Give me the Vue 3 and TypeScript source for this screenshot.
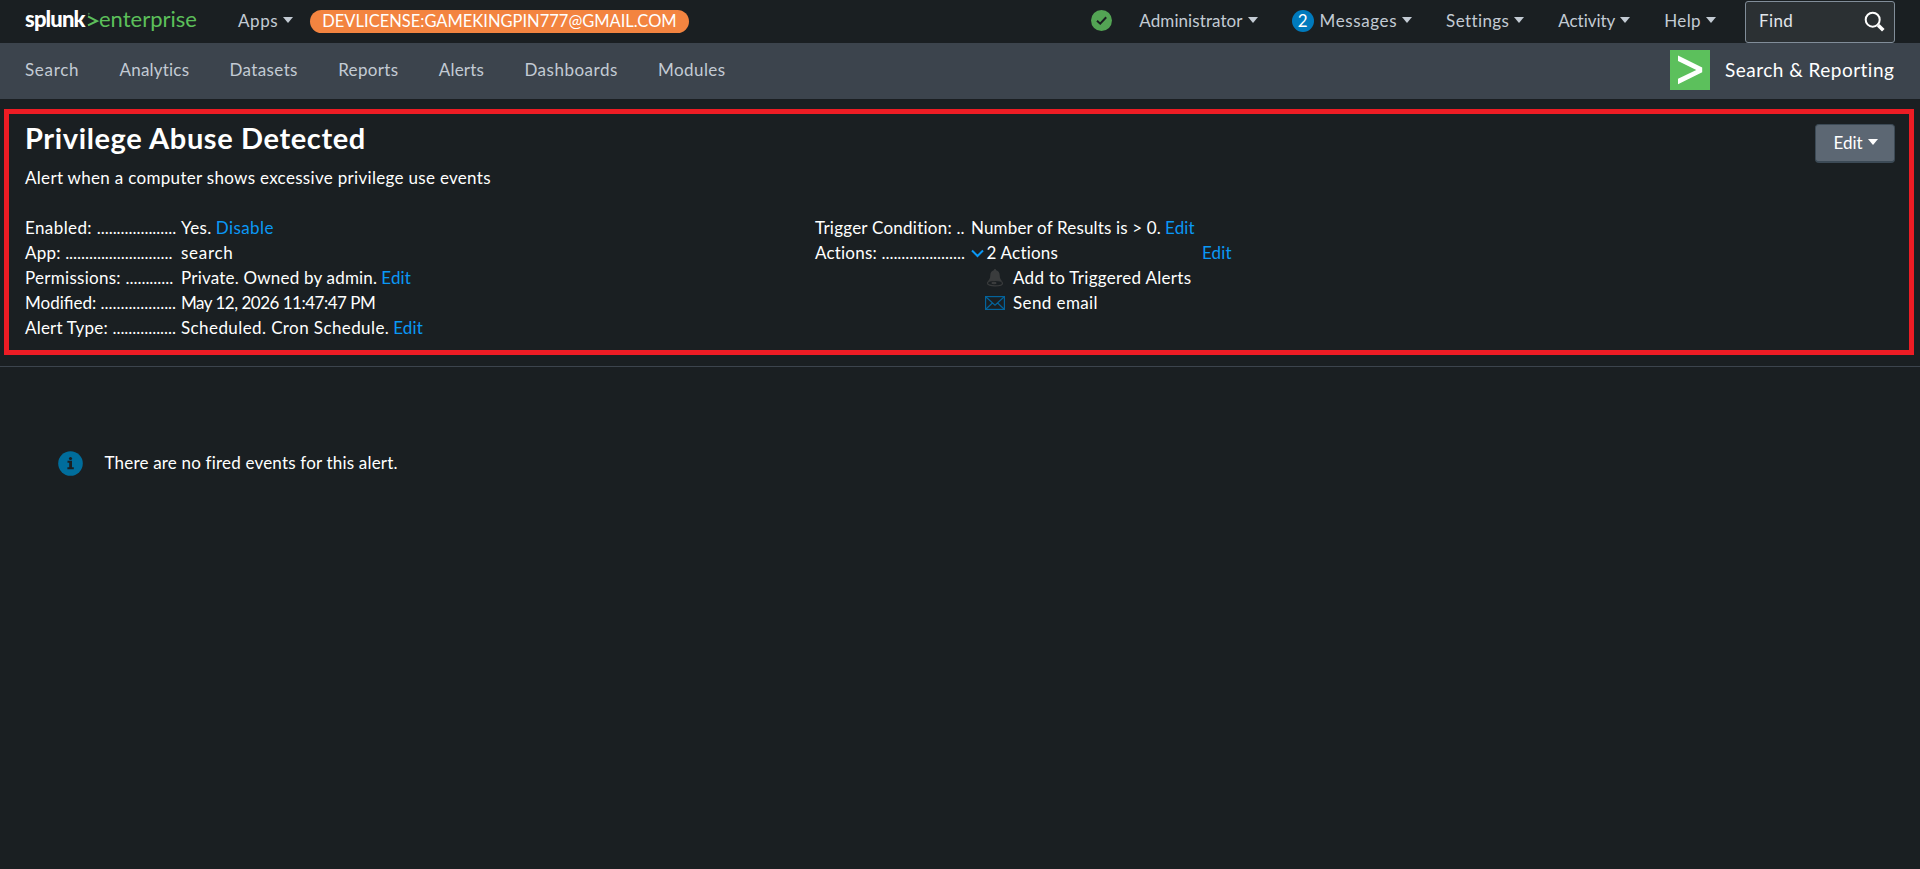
<script setup lang="ts">
interface Label {
  text: string
  track: number
}
interface Detail {
  label: Label
  dots: number
  value: Label
  link?: Label
}

const edit: Label = { text: 'Edit', track: 0.15 }

const menus: (Label & { count?: number })[] = [
  { text: 'Administrator', track: 0.08 },
  { text: 'Messages', track: 0.6, count: 2 },
  { text: 'Settings', track: 0.4 },
  { text: 'Activity', track: -0.06 },
  { text: 'Help', track: 0.4 },
]

const navItems: Label[] = [
  { text: 'Search', track: 0.7 },
  { text: 'Analytics', track: 0.2 },
  { text: 'Datasets', track: 0.38 },
  { text: 'Reports', track: 0.35 },
  { text: 'Alerts', track: 0.2 },
  { text: 'Dashboards', track: 0.5 },
  { text: 'Modules', track: 0.42 },
]

const details: Detail[] = [
  { label: { text: 'Enabled:', track: 0.4 }, dots: 20, value: { text: 'Yes.', track: 0.4 }, link: { text: 'Disable', track: 0.42 } },
  { label: { text: 'App:', track: 0.2 }, dots: 27, value: { text: 'search', track: 0.7 } },
  { label: { text: 'Permissions:', track: 0.28 }, dots: 12, value: { text: 'Private. Owned by admin.', track: 0.2 }, link: edit },
  { label: { text: 'Modified:', track: 0 }, dots: 19, value: { text: 'May 12, 2026 11:47:47 PM', track: -0.5 } },
  { label: { text: 'Alert Type:', track: 0.2 }, dots: 16, value: { text: 'Scheduled. Cron Schedule.', track: 0.41 }, link: edit },
]

const leader = (n: number) => '.'.repeat(n)

const tracking = (l: Label) => ({ letterSpacing: `${l.track}px` })
</script>

<template>
  <div class="page">
    <header class="topbar">
      <div class="brand">
        <span class="brand-name">splunk</span>
        <svg class="brand-mark" width="12" height="16" viewBox="0 0 12 16">
          <path d="M1 4.4 10 9 1 13.4" fill="none" stroke="#5cbf5a" stroke-width="2" />
          <circle cx="1.8" cy="1.8" r="1" fill="#43774a" />
        </svg>
        <span class="brand-edition">enterprise</span>
      </div>
      <div class="menu apps"><span class="apps-text">Apps</span><i class="caret"></i></div>
      <span class="license">DEVLICENSE:GAMEKINGPIN777@GMAIL.COM</span>
      <div class="menus">
        <svg class="health" width="21" height="21" viewBox="0 0 21 21">
          <circle cx="10.5" cy="10.5" r="10.5" fill="#53a454" />
          <path d="M6 10.8 9.2 13.7 15.2 7.2" fill="none" stroke="#1a1f22" stroke-width="2" />
        </svg>
        <div v-for="m in menus" :key="m.text" class="menu">
          <span v-if="m.count" class="count">{{ m.count }}</span>
          <span :style="tracking(m)">{{ m.text }}</span><i class="caret"></i>
        </div>
        <div class="find">
          <span class="find-text">Find</span>
          <svg width="22" height="22" viewBox="0 0 22 22" fill="none" stroke="#fff">
            <circle cx="8.7" cy="8.7" r="7" stroke-width="2" />
            <path d="M14.2 14.2 19.3 19.3" stroke-width="3.6" />
          </svg>
        </div>
      </div>
    </header>

    <nav class="appbar">
      <a v-for="n in navItems" :key="n.text" class="nav-link" :style="tracking(n)">{{ n.text }}</a>
      <div class="app">
        <svg width="40" height="40" viewBox="0 0 40 40">
          <rect width="40" height="40" fill="#5cc05c" />
          <path d="M8 5.5 32.2 17.6V22.2L8 34.3V28.7L26.3 20 8 11Z" fill="#fff" />
        </svg>
        <span class="app-name">Search &amp; Reporting</span>
      </div>
    </nav>

    <section class="alert">
      <div class="summary">
        <h1 class="title">Privilege Abuse Detected</h1>
        <p class="description">Alert when a computer shows excessive privilege use events</p>
        <div class="columns">
          <div class="column">
            <div v-for="d in details" :key="d.label.text" class="row">
              <span class="key" :style="tracking(d.label)">{{ d.label.text }} <span class="dots">{{ leader(d.dots) }}</span></span>
              <span :style="tracking(d.value)">{{ d.value.text }}</span>
              <a v-if="d.link" class="link" :style="tracking(d.link)">{{ d.link.text }}</a>
            </div>
          </div>
          <div class="column">
            <div class="row">
              <span class="key trigger">Trigger Condition: <span class="dots">{{ leader(2) }}</span></span>
              <span class="condition">Number of Results is &gt; 0.</span>
              <a class="link">Edit</a>
            </div>
            <div class="row">
              <span class="key actions">Actions: <span class="dots">{{ leader(21) }}</span></span>
              <span class="toggle">
                <svg width="13" height="9" viewBox="0 0 13 9"><path d="M1 1.5 6.5 7 12 1.5" fill="none" stroke="#0a98f5" stroke-width="2" /></svg>
                2 Actions
              </span>
              <a class="link-edge">Edit</a>
            </div>
            <div class="row action">
              <svg class="action-icon" width="20" height="18" viewBox="0 0 20 18">
                <path d="M8.8 1.2a1.2 1.2 0 0 1 2.4 0c2.4.6 3.4 2.5 3.5 5 .1 3 .9 4.6 2.6 6.1H2.7c1.7-1.5 2.5-3.1 2.6-6.1.1-2.5 1.1-4.4 3.500-5Z" fill="#3a3c3d" />
                <ellipse cx="10" cy="14.2" rx="7.500" ry="2.700" fill="#1a1f22" stroke="#3a3c3d" stroke-width="1.2" />
                <ellipse cx="9" cy="14" rx="2.600" ry="1.200" fill="#3a3c3d" />
              </svg>
              <span class="add">Add to Triggered Alerts</span>
            </div>
            <div class="row action">
              <svg class="action-icon" width="20" height="14" viewBox="0 0 20 14" fill="none" stroke="#04639b">
                <rect x=".6" y=".6" width="18.800" height="12.800" stroke-width="1.200" />
                <path d="M1 1 10 9.300 19 1M1 13 7.400 7M19 13 12.600 7" stroke-width="1.200" />
              </svg>
              <span class="send">Send email</span>
            </div>
          </div>
        </div>
      </div>
      <button class="edit-button" type="button">Edit<i class="caret"></i></button>
    </section>

    <main class="results">
      <svg width="25" height="25" viewBox="0 0 25 25">
        <circle cx="12.5" cy="12.5" r="12.3" fill="#006d9c" />
        <path d="M9.5 9.800H14V16.300H15.800V18.200H9.400V16.300H11.200V11.700H9.500Z" fill="#1a1f22" />
        <circle cx="12.5" cy="7.5" r="1.6" fill="#1a1f22" />
      </svg>
      <span class="message">There are no fired events for this alert.</span>
    </main>
  </div>
</template>

<style>
body {
  background: #1a1f22;
}
</style>

<style scoped>
.page {
  min-height: 869px;
  background: #1a1f22;
  color: #fff;
  font: 17px/25px Lato, "Liberation Sans", sans-serif;
}
.topbar {
  box-sizing: border-box;
  display: flex;
  align-items: flex-start;
  height: 43px;
  padding: 0 25px;
  color: #c3cbd4;
}
.brand {
  display: flex;
  width: 213px;
  padding-top: 6px;
  font-size: 22px;
  line-height: 26px;
}
.brand-name {
  width: 62px;
  color: #fff;
  font-weight: 900;
  letter-spacing: -0.85px;
}
.brand-mark {
  margin-top: 6px;
}
.brand-edition {
  color: #5cbf5a;
}
.menu {
  display: flex;
  align-items: center;
  padding-top: 8px;
  white-space: nowrap;
}
.apps {
  width: 72px;
}
.apps-text {
  letter-spacing: 0.6px;
}
.caret {
  width: 0;
  height: 0;
  margin: -1px 0 0 5px;
  border: 5px solid transparent;
  border-top: 6px solid currentColor;
  border-bottom: 0;
}
.license {
  box-sizing: border-box;
  width: 379px;
  height: 23px;
  margin-top: 10px;
  border-radius: 12px;
  background: #f38440;
  color: #fff;
  font-size: 16.5px;
  line-height: 22px;
  text-align: center;
}
.menus {
  display: flex;
  align-items: flex-start;
  gap: 34px;
  margin-left: auto;
}
.health {
  margin: 10px -7px 0 0;
}
.count {
  width: 22px;
  height: 22px;
  margin-right: 6px;
  border-radius: 11px;
  background: #007abd;
  color: #fff;
  line-height: 21px;
  text-align: center;
}
.find {
  box-sizing: border-box;
  display: flex;
  justify-content: space-between;
  width: 150px;
  height: 42px;
  margin: 1px 0 0 -5px;
  padding: 6px 8px 0 13px;
  border: 1px solid #818d99;
  border-radius: 3px;
  background: #2b3033;
  color: #e1e6eb;
}
.find-text {
  letter-spacing: 0.4px;
}
.find svg {
  margin-top: 3px;
}
.appbar {
  box-sizing: border-box;
  display: flex;
  gap: 40.3px;
  height: 56px;
  padding: 14px 25px 0;
  background: #3c444d;
  color: #c3cbd4;
}
.app {
  display: flex;
  gap: 15px;
  margin: -7px 0 0 auto;
  color: #fff;
}
.app-name {
  width: 170px;
  padding-top: 7px;
  font-size: 19px;
  letter-spacing: 0.48px;
  white-space: nowrap;
}
.alert {
  box-sizing: border-box;
  display: flex;
  justify-content: space-between;
  width: 1910px;
  height: 246px;
  margin: 10px 0 0 4px;
  padding: 5px 14px 0 16px;
  border: 5px solid #ed1c24;
}
.title {
  margin: 0;
  font-size: 29px;
  font-weight: 700;
  line-height: 38px;
  letter-spacing: 0.62px;
}
.description {
  margin: 8px 0 25px;
  letter-spacing: 0.31px;
}
.columns {
  display: flex;
}
.column {
  width: 790px;
}
.row {
  display: flex;
  height: 25px;
  white-space: nowrap;
}
.key {
  width: 150px;
  margin-right: 6px;
}
.dots {
  letter-spacing: -0.04px;
}
.trigger {
  letter-spacing: 0.24px;
}
.actions {
  letter-spacing: 0.2px;
}
.condition {
  letter-spacing: 0.16px;
}
.link,
.link-edge {
  color: #0a98f5;
  letter-spacing: 0.15px;
}
.link {
  margin-left: 4px;
}
.toggle {
  width: 231px;
  letter-spacing: 0.2px;
}
.toggle svg {
  margin-right: -2px;
  vertical-align: 1px;
}
.action {
  align-items: center;
  padding-left: 170px;
}
.action-icon {
  margin-right: 8px;
}
.add {
  letter-spacing: 0.3px;
}
.send {
  letter-spacing: 0.4px;
}
.edit-button {
  box-sizing: border-box;
  display: flex;
  align-items: center;
  justify-content: center;
  width: 80px;
  height: 39px;
  margin-top: 5px;
  padding: 0 0 1px 1px;
  border: 1px solid #3c4a56;
  border-bottom-width: 2px;
  border-radius: 4px;
  background: #5c6773;
  color: #fff;
  font: inherit;
}
.results {
  display: flex;
  align-items: flex-start;
  gap: 21.5px;
  margin-top: 11px;
  padding: 84px 58px 0;
  border-top: 1px solid #3c444d;
}
.message {
  margin-top: -1px;
  letter-spacing: 0.19px;
}
</style>
